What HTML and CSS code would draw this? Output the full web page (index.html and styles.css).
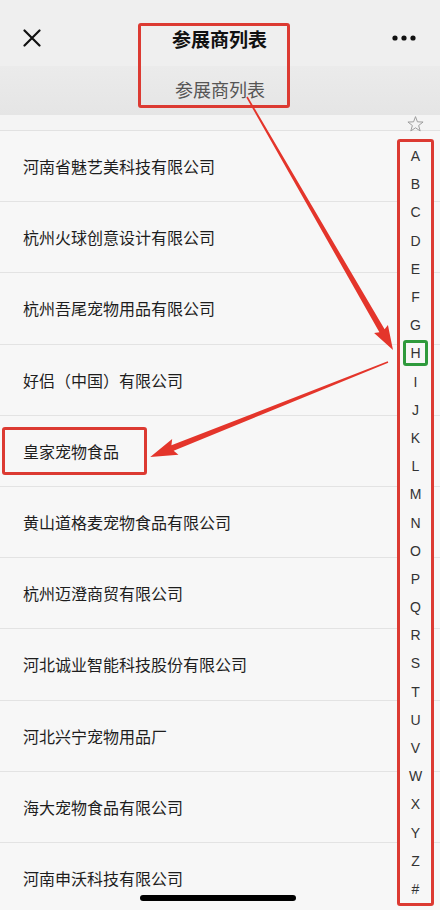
FILE: index.html
```html
<!DOCTYPE html>
<html lang="zh">

<head>
  <meta charset="UTF-8">
  <meta name="viewport" content="width=device-width, initial-scale=1.0">
  <title>参展商列表</title>
  <link rel="stylesheet" href="styles.css">
</head>

<body>
  <div class="screen">
    <header class="topbar">
      <svg class="close" width="18" height="18" viewBox="0 0 18 18">
        <path d="M1.5 1.5 L16.5 16.5 M16.5 1.5 L1.5 16.5" stroke="#111" stroke-width="2.2" stroke-linecap="round" />
      </svg>
      <h1>参展商列表</h1>
      <svg class="more" width="24" height="6" viewBox="0 0 24 6">
        <circle cx="3" cy="3" r="2.6" fill="#111" />
        <circle cx="12" cy="3" r="2.6" fill="#111" />
        <circle cx="21" cy="3" r="2.6" fill="#111" />
      </svg>
    </header>
    <div class="subbar">参展商列表</div>
    <div class="strip"></div>

    <ul class="list">
      <li>河南省魅艺美科技有限公司</li>
      <li>杭州火球创意设计有限公司</li>
      <li>杭州吾尾宠物用品有限公司</li>
      <li>好侣（中国）有限公司</li>
      <li><span class="marked">皇家宠物食品</span></li>
      <li>黄山道格麦宠物食品有限公司</li>
      <li>杭州迈澄商贸有限公司</li>
      <li>河北诚业智能科技股份有限公司</li>
      <li>河北兴宁宠物用品厂</li>
      <li>海大宠物食品有限公司</li>
      <li>河南申沃科技有限公司</li>
    </ul>

    <nav class="index">
      <svg class="star" width="17" height="17" viewBox="0 0 16 16">
        <polygon points="8,0.6 9.82,5.49 15.13,5.68 10.95,8.96 12.41,14.07 8,11.1 3.59,14.07 5.05,8.96 0.87,5.68 6.18,5.49"
          fill="none" stroke="#9a9a9a" stroke-width="0.9" stroke-linejoin="round" />
      </svg>
      <ol class="letters">
        <li>A</li><li>B</li><li>C</li><li>D</li><li>E</li><li>F</li><li>G</li>
        <li><span class="picked">H</span></li>
        <li>I</li><li>J</li><li>K</li><li>L</li><li>M</li><li>N</li><li>O</li>
        <li>P</li><li>Q</li><li>R</li><li>S</li><li>T</li><li>U</li><li>V</li>
        <li>W</li><li>X</li><li>Y</li><li>Z</li><li>#</li>
      </ol>
    </nav>

    <div class="title-mark"></div>

    <svg class="arrows" width="440" height="910" viewBox="0 0 440 910">
      <!-- from the title box down to H -->
      <g transform="translate(247,97) rotate(60)">
        <polygon points="0,-0.8 270,-3 268,-8 292,0 268,8 270,3 0,0.8" fill="#e4352b" />
      </g>
      <!-- from H to the marked row -->
      <g transform="translate(388,362) rotate(158.24)">
        <polygon points="0,-0.7 232,-3 229,-8.5 256,0 229,8.5 232,3 0,0.7" fill="#e4352b" />
      </g>
    </svg>

    <div class="home-bar"></div>
  </div>
</body>

</html>
```

FILE: styles.css
```css
body {
  margin: 0;
  font-family: "Noto Sans CJK SC", "Noto Sans", sans-serif;
  background-color: #f7f7f7;
}

.screen {
  position: relative;
  width: 440px;
  height: 910px;
  overflow: hidden;
  background-color: #f7f7f7;
}

.topbar {
  display: grid;
  grid-template-columns: 1fr auto 1fr;
  align-items: center;
  height: 56px;
  padding: 10px 24px 0 23px;
  background-color: #efefef;
}

.topbar h1 {
  margin: 0;
  font-size: 19px;
  font-weight: 700;
  color: #111;
}

.more {
  justify-self: end;
}

.subbar {
  height: 49px;
  line-height: 47px;
  text-align: center;
  font-size: 18px;
  color: #555;
  background: linear-gradient(#ebebeb, #e5e5e5);
}

.strip {
  height: 15px;
  background-color: #f4f4f4;
  border-bottom: 1px solid #e2e2e2;
}

.list {
  margin: 0;
  padding: 0;
  list-style: none;
}

.list li {
  display: flex;
  align-items: center;
  height: 70.2px;
  padding-left: 23px;
  border-bottom: 1px solid #e3e3e3;
  font-size: 16px;
  color: #1e1e1e;
}

.marked {
  margin-left: -21px;
  padding: 0 25px 0 18px;
  height: 42px;
  line-height: 42px;
  border: 3px solid #dc3a32;
  border-radius: 3px;
}

/* alphabet index over the right edge of the list */
.index {
  position: absolute;
  top: 116px;
  right: 6px;
  width: 37px;
  display: flex;
  flex-direction: column;
  align-items: center;
  gap: 6px;
}

.star {
  display: block;
}

.letters {
  margin: 0;
  padding: 0;
  list-style: none;
  width: 31px;
  border: 3px solid #dc3a32;
  border-radius: 3px;
  background-color: #f7f7f7;
}

.letters li {
  display: flex;
  align-items: center;
  justify-content: center;
  height: 28.2px;
  font-family: "Liberation Sans", Arial, sans-serif;
  font-size: 14px;
  color: #333;
}

.picked {
  display: flex;
  align-items: center;
  justify-content: center;
  width: 19px;
  height: 20px;
  border: 3px solid #2e9a3c;
  border-radius: 3px;
}

.title-mark {
  position: absolute;
  top: 23px;
  left: 138px;
  width: 146px;
  height: 79px;
  border: 3px solid #dc3a32;
  border-radius: 3px;
}

.arrows {
  position: absolute;
  top: 0;
  left: 0;
  pointer-events: none;
}

.home-bar {
  position: absolute;
  left: 140px;
  bottom: 9px;
  width: 156px;
  height: 6px;
  border-radius: 3px;
  background-color: #000;
}
```
